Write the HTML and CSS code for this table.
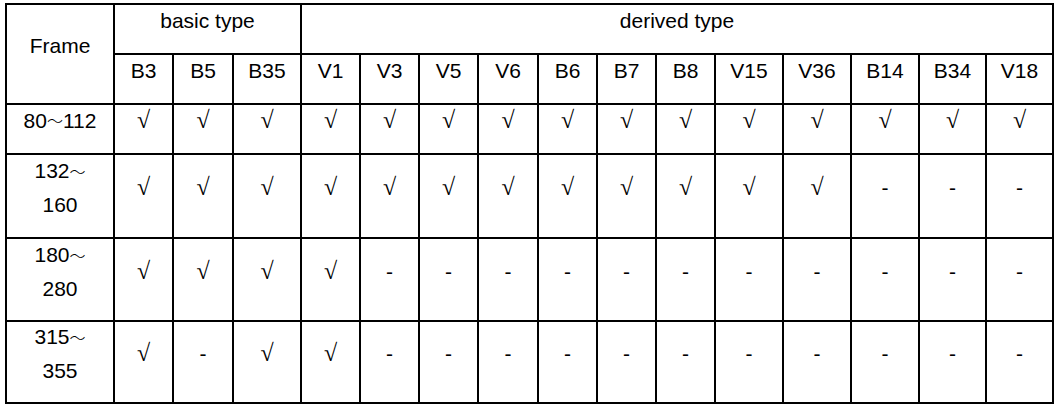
FILE: index.html
```html
<!DOCTYPE html>
<html lang="en">
<head>
<meta charset="utf-8">
<title>Frame types</title>
<link rel="stylesheet" href="styles.css">
</head>
<body>
<div class="tbl">
  <div class="c frame">Frame</div>
  <div class="c basic">basic type</div>
  <div class="c derived">derived type</div>

  <div class="c">B3</div><div class="c">B5</div><div class="c">B35</div>
  <div class="c">V1</div><div class="c">V3</div><div class="c">V5</div><div class="c">V6</div>
  <div class="c">B6</div><div class="c">B7</div><div class="c">B8</div><div class="c">V15</div>
  <div class="c">V36</div><div class="c">B14</div><div class="c">B34</div><div class="c">V18</div>

  <div class="c">80<span class="t">～</span>112</div>
  <div class="c ok">√</div><div class="c ok">√</div><div class="c ok">√</div>
  <div class="c ok">√</div><div class="c ok">√</div><div class="c ok">√</div><div class="c ok">√</div>
  <div class="c ok">√</div><div class="c ok">√</div><div class="c ok">√</div><div class="c ok">√</div>
  <div class="c ok">√</div><div class="c ok">√</div><div class="c ok">√</div><div class="c ok">√</div>

  <div class="c"><span>132<span class="t">～</span><br>160</span></div>
  <div class="c ok">√</div><div class="c ok">√</div><div class="c ok">√</div>
  <div class="c ok">√</div><div class="c ok">√</div><div class="c ok">√</div><div class="c ok">√</div>
  <div class="c ok">√</div><div class="c ok">√</div><div class="c ok">√</div><div class="c ok">√</div>
  <div class="c ok">√</div><div class="c">-</div><div class="c">-</div><div class="c">-</div>

  <div class="c"><span>180<span class="t">～</span><br>280</span></div>
  <div class="c ok">√</div><div class="c ok">√</div><div class="c ok">√</div>
  <div class="c ok">√</div><div class="c">-</div><div class="c">-</div><div class="c">-</div>
  <div class="c">-</div><div class="c">-</div><div class="c">-</div><div class="c">-</div>
  <div class="c">-</div><div class="c">-</div><div class="c">-</div><div class="c">-</div>

  <div class="c"><span>315<span class="t">～</span><br>355</span></div>
  <div class="c ok">√</div><div class="c">-</div><div class="c ok">√</div>
  <div class="c ok">√</div><div class="c">-</div><div class="c">-</div><div class="c">-</div>
  <div class="c">-</div><div class="c">-</div><div class="c">-</div><div class="c">-</div>
  <div class="c">-</div><div class="c">-</div><div class="c">-</div><div class="c">-</div>
</div>
</body>
</html>
```
FILE: styles.css
```css
html, body {
  margin: 0;
  padding: 0;
  background: #ffffff;
}
body {
  padding: 3px 0 0 5px;
  font-family: "Liberation Sans", Arial, sans-serif;
  font-size: 21px;
  color: #000000;
}
.tbl {
  display: grid;
  width: 1049px;
  grid-template-columns: 108px 59px 60px 68px 59px 59px 59px 60px 59px 59px 59px 68px 68px 68px 67px 67px;
  grid-template-rows: 50px 50px 50px 84px 83px 82px;
  border-left: 2px solid #000;
  border-top: 2px solid #000;
  box-sizing: border-box;
}
.c {
  box-sizing: border-box;
  border-right: 2px solid #000;
  border-bottom: 2px solid #000;
  display: flex;
  align-items: center;
  justify-content: center;
  text-align: center;
  line-height: 33px;
  padding-bottom: 17px;
  white-space: nowrap;
}
.frame {
  grid-row: span 2;
}
.basic {
  grid-column: span 3;
}
.derived {
  grid-column: span 12;
}
.t {
  font-family: "Noto Sans CJK SC", sans-serif;
  font-size: 16px;
  font-weight: 300;
}
.ok {
  font-family: "Liberation Serif", serif;
  font-size: 24px;
}
```
